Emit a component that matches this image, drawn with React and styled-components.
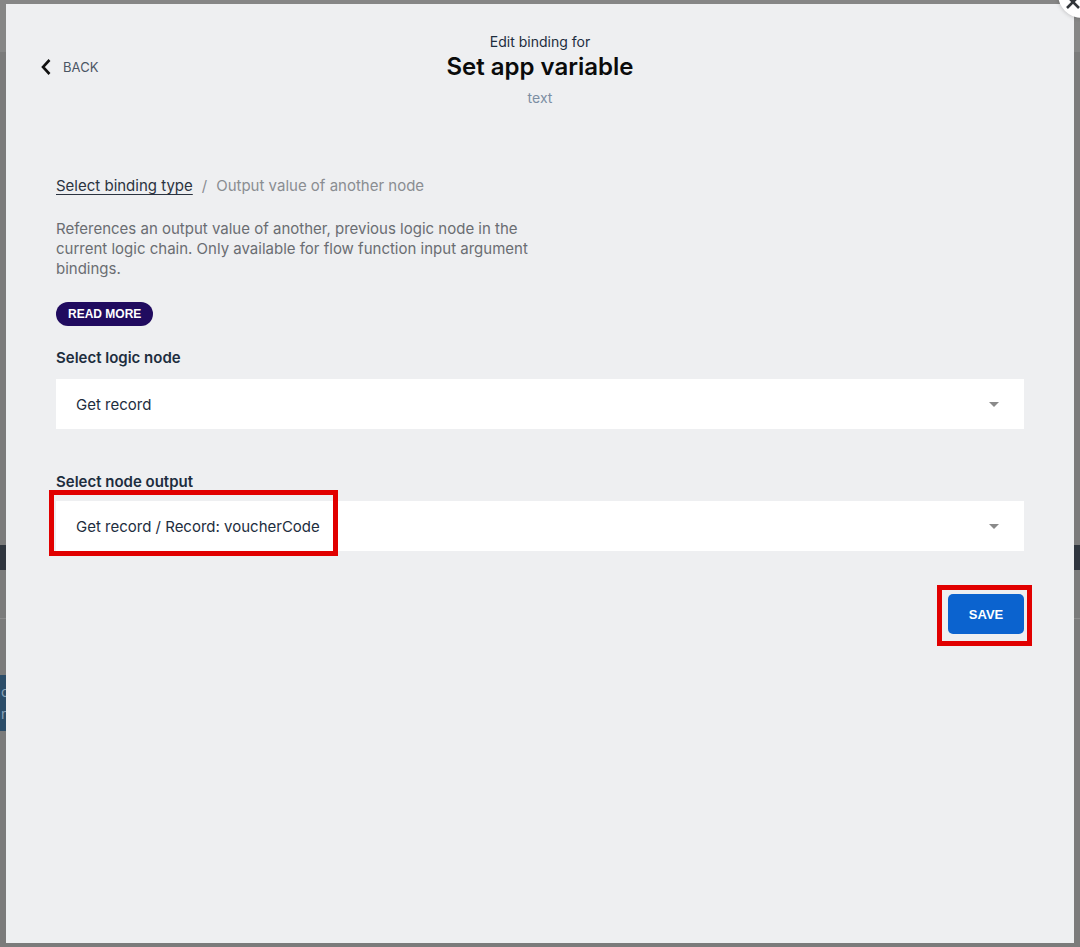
import React from "react";
import styled, { createGlobalStyle } from "styled-components";

const GlobalStyle = createGlobalStyle`
  html, body {
    margin: 0;
    padding: 0;
    width: 100%;
    height: 100%;
    overflow: hidden;
    background: #7b7b7b;
    font-family: Inter, "Noto Sans", "Liberation Sans", sans-serif;
  }
  * { box-sizing: border-box; }
`;

/* dimmed app underneath the dialog */
const Behind = styled.div`
  position: fixed;
  inset: 0;
  display: flex;
  flex-direction: column;
  background: #7b7b7b;
`;

const BehindBar = styled.div`
  height: ${(p) => p.$h}px;
  flex-shrink: 0;
  background: ${(p) => p.$bg || "transparent"};
  border-bottom: ${(p) => (p.$line ? "1px solid #8c8c8c" : "none")};
`;

const BehindRow = styled.div`
  display: flex;
  height: ${(p) => p.$h}px;
  flex-shrink: 0;
`;

const BehindTile = styled.div`
  width: 120px;
  background: #2c4d69;
  color: #8aa3b8;
  font-size: 14px;
  line-height: 22px;
  padding: 6px 0 0 1px;
  overflow: hidden;
`;

const Modal = styled.div`
  position: fixed;
  left: 6px;
  top: 4px;
  width: 1068px;
  height: 939px;
  background: #eeeff1;
  display: flex;
  flex-direction: column;
  padding: 0 50px;
`;

const CloseButton = styled.button`
  position: fixed;
  left: 1058px;
  top: -30px;
  width: 48px;
  height: 48px;
  border-radius: 50%;
  border: none;
  background: #ffffff;
  box-shadow: 0 0 4px rgba(0, 0, 0, 0.25);
  padding: 0;
`;

const CloseIcon = styled.svg`
  position: absolute;
  left: 7px;
  top: 24px;
`;

const Header = styled.div`
  position: relative;
  display: flex;
  flex-direction: column;
  align-items: center;
  padding-top: 29px;
  height: 173px;
`;

const Back = styled.div`
  position: absolute;
  left: -16px;
  top: 54px;
  display: flex;
  align-items: center;
  gap: 11px;
  color: #4b5563;
  font-size: 13px;
  letter-spacing: 0.1px;
`;

const Eyebrow = styled.div`
  font-size: 14px;
  line-height: 18px;
  color: #1d2d3e;
`;

const Title = styled.h1`
  margin: 0;
  font-size: 24px;
  line-height: 32px;
  font-weight: 600;
  color: #0b0b0b;
`;

const Subtitle = styled.div`
  margin-top: 6px;
  font-size: 14px;
  line-height: 18px;
  color: #7c8ea3;
`;

const Breadcrumb = styled.div`
  display: flex;
  gap: 9px;
  font-size: 15px;
  line-height: 18px;
  color: #8a8d92;
`;

const CrumbLink = styled.span`
  color: #2b3340;
  text-decoration: underline;
  text-underline-offset: 3px;
`;

const Description = styled.p`
  margin: 24px 0 0;
  max-width: 500px;
  font-size: 15px;
  line-height: 20px;
  color: #6a6d72;
`;

const Pill = styled.button`
  align-self: flex-start;
  margin-top: 23px;
  height: 24px;
  padding: 0 12px;
  border: none;
  border-radius: 12px;
  background: #200b5f;
  color: #ffffff;
  font-family: "Liberation Sans", Arial, sans-serif;
  font-size: 12px;
  font-weight: 700;
`;

const FieldLabel = styled.div`
  margin-top: ${(p) => p.$mt}px;
  font-size: 15px;
  line-height: 18px;
  font-weight: 600;
  color: #1d2d3e;
`;

const Select = styled.div`
  position: relative;
  margin-top: ${(p) => p.$mt}px;
  height: 50px;
  background: #ffffff;
  display: flex;
  align-items: center;
  justify-content: space-between;
  padding: 0 25px 0 20px;
  font-size: 15px;
  color: #1d2d3e;
`;

const Caret = styled.span`
  width: 0;
  height: 0;
  border-left: 5px solid transparent;
  border-right: 5px solid transparent;
  border-top: 5px solid #8a8a8a;
`;

const Highlight = styled.div`
  position: absolute;
  left: ${(p) => p.$l}px;
  top: ${(p) => p.$t}px;
  width: ${(p) => p.$w}px;
  height: ${(p) => p.$h}px;
  border: 5px solid #e10000;
  pointer-events: none;
`;

const Actions = styled.div`
  display: flex;
  justify-content: flex-end;
  margin-top: 43px;
`;

const SaveWrap = styled.div`
  position: relative;
  display: flex;
`;

const SaveButton = styled.button`
  width: 76px;
  height: 40px;
  border: none;
  border-radius: 5px;
  background: #0b63cf;
  color: #ffffff;
  font-family: "Liberation Sans", Arial, sans-serif;
  font-size: 13px;
  font-weight: 700;
`;

export default function App() {
  return (
    <>
      <GlobalStyle />
      <Behind>
        <BehindBar $h={52} $bg="#868686" />
        <BehindBar $h={493} />
        <BehindBar $h={25} $bg="#30363f" />
        <BehindBar $h={49} $line />
        <BehindBar $h={56} />
        <BehindRow $h={56}>
          <BehindTile>
            co
            <br />
            n
          </BehindTile>
        </BehindRow>
      </Behind>

      <Modal>
        <Header>
          <Back>
            <svg width="12" height="18" viewBox="0 0 12 18">
              <path d="M9.5 2 L3 9 L9.5 16" fill="none" stroke="#111" strokeWidth="2.6" />
            </svg>
            BACK
          </Back>
          <Eyebrow>Edit binding for</Eyebrow>
          <Title>Set app variable</Title>
          <Subtitle>text</Subtitle>
        </Header>

        <Breadcrumb>
          <CrumbLink>Select binding type</CrumbLink>
          <span>/</span>
          <span>Output value of another node</span>
        </Breadcrumb>

        <Description>
          References an output value of another, previous logic node in the
          current logic chain. Only available for flow function input argument
          bindings.
        </Description>

        <Pill>READ MORE</Pill>

        <FieldLabel $mt={23}>Select logic node</FieldLabel>
        <Select $mt={12}>
          <span>Get record</span>
          <Caret />
        </Select>

        <FieldLabel $mt={44}>Select node output</FieldLabel>
        <Select $mt={10}>
          <span>Get record / Record: voucherCode</span>
          <Caret />
          <Highlight $l={-7} $t={-11} $w={289} $h={66} />
        </Select>

        <Actions>
          <SaveWrap>
            <SaveButton>SAVE</SaveButton>
            <Highlight $l={-11} $t={-9} $w={95} $h={61} />
          </SaveWrap>
        </Actions>
      </Modal>

      <CloseButton>
        <CloseIcon width="16" height="16" viewBox="0 0 16 16">
          <path d="M2 2 L14 14 M14 2 L2 14" stroke="#32363a" strokeWidth="2.6" />
        </CloseIcon>
      </CloseButton>
    </>
  );
}
